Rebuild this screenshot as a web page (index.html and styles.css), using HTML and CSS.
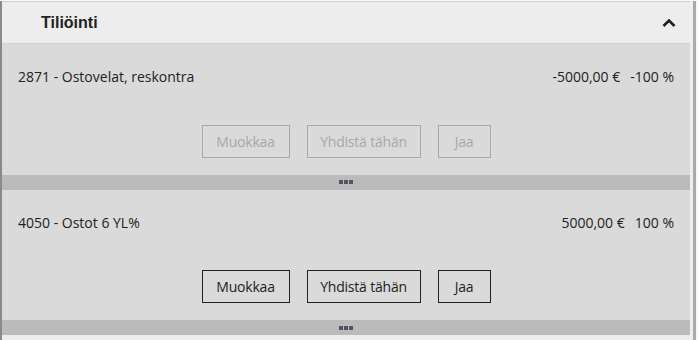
FILE: index.html
```html
<!DOCTYPE html>
<html lang="fi">
<head>
    <meta charset="UTF-8">
    <meta name="viewport" content="width=device-width, initial-scale=1.0">
    <title>Tiliöinti</title>
    <link rel="stylesheet" href="styles.css">
</head>
<body>

    <div class="page">
        <div class="side-strip"></div>

        <div class="panel">
            <div class="panel-header">
                <h2>Tiliöinti</h2>
                <svg class="chevron" width="14" height="10" viewBox="0 0 14 10">
                    <polyline points="1.5,8 7,2.5 12.5,8" fill="none" stroke="#1f1f1f" stroke-width="2.6"/>
                </svg>
            </div>

            <div class="entry">
                <div class="entry-line">
                    <span class="account">2871 - Ostovelat, reskontra</span>
                    <span class="sums">
                        <span>-5000,00 €</span>
                        <span>-100 %</span>
                    </span>
                </div>
                <div class="entry-actions">
                    <button class="btn-edit" disabled>Muokkaa</button>
                    <button class="btn-merge" disabled>Yhdistä tähän</button>
                    <button class="btn-split" disabled>Jaa</button>
                </div>
            </div>
            <div class="divider"><span></span><span></span><span></span></div>

            <div class="entry">
                <div class="entry-line">
                    <span class="account">4050 - Ostot 6 YL%</span>
                    <span class="sums">
                        <span>5000,00 €</span>
                        <span>100 %</span>
                    </span>
                </div>
                <div class="entry-actions">
                    <button class="btn-edit">Muokkaa</button>
                    <button class="btn-merge">Yhdistä tähän</button>
                    <button class="btn-split">Jaa</button>
                </div>
            </div>
            <div class="divider"><span></span><span></span><span></span></div>

            <div class="panel-footer"></div>
        </div>

        <div class="scroll-edge"></div>
    </div>

</body>
</html>
```

FILE: styles.css
```css
body {
    margin: 0;
    background-color: #f7f7f7;
    font-family: "Open Sans", "Noto Sans", sans-serif;
    color: #222;
    overflow: hidden;
}
.page {
    display: flex;
    height: 340px;
    padding-top: 1px;
    box-sizing: border-box;
    background-color: #f7f7f7;
}
.side-strip {
    width: 2px;
    background-color: #8a8a8a;
}
.panel {
    width: 688px;
    border-top: 1px solid #cfcfcf;
    background-color: #ededed;
}
.scroll-edge {
    width: 3px;
    background-color: #eeeeee;
    border-right: 3px solid #aaaaaa;
}
.panel-header {
    height: 41px;
    display: flex;
    align-items: center;
    justify-content: space-between;
    padding: 0 14px 0 39px;
    border-bottom: 1px solid #d4d4d4;
}
.panel-header h2 {
    margin: 0;
    font-family: "Liberation Sans", Arial, sans-serif;
    font-size: 16px;
    font-weight: bold;
    color: #222;
}
.entry {
    background-color: #dadada;
    padding: 22px 16px 17px 16px;
}
.entry-line {
    display: flex;
    justify-content: space-between;
    height: 22px;
    line-height: 22px;
    font-size: 14px;
}
.sums {
    display: flex;
    gap: 10px;
}
.entry-actions {
    display: flex;
    justify-content: center;
    gap: 17px;
    margin-top: 36.5px;
}
button {
    height: 33px;
    padding: 0;
    font-family: "Open Sans", "Noto Sans", sans-serif;
    font-size: 14px;
    letter-spacing: -0.2px;
    color: #222;
    background-color: transparent;
    border: 1px solid #222;
    border-radius: 0;
}
button:disabled {
    color: #a8a8a8;
    border-color: #a8a8a8;
}
.btn-edit {
    width: 88px;
}
.btn-merge {
    width: 114px;
}
.btn-split {
    width: 53px;
}
.divider {
    height: 15px;
    background-color: #bbbbbb;
    display: flex;
    justify-content: center;
    align-items: center;
    gap: 1px;
}
.divider span {
    width: 4px;
    height: 4px;
    background-color: #4e5661;
}
.panel-footer {
    height: 10px;
    background-color: #ededed;
}
```
